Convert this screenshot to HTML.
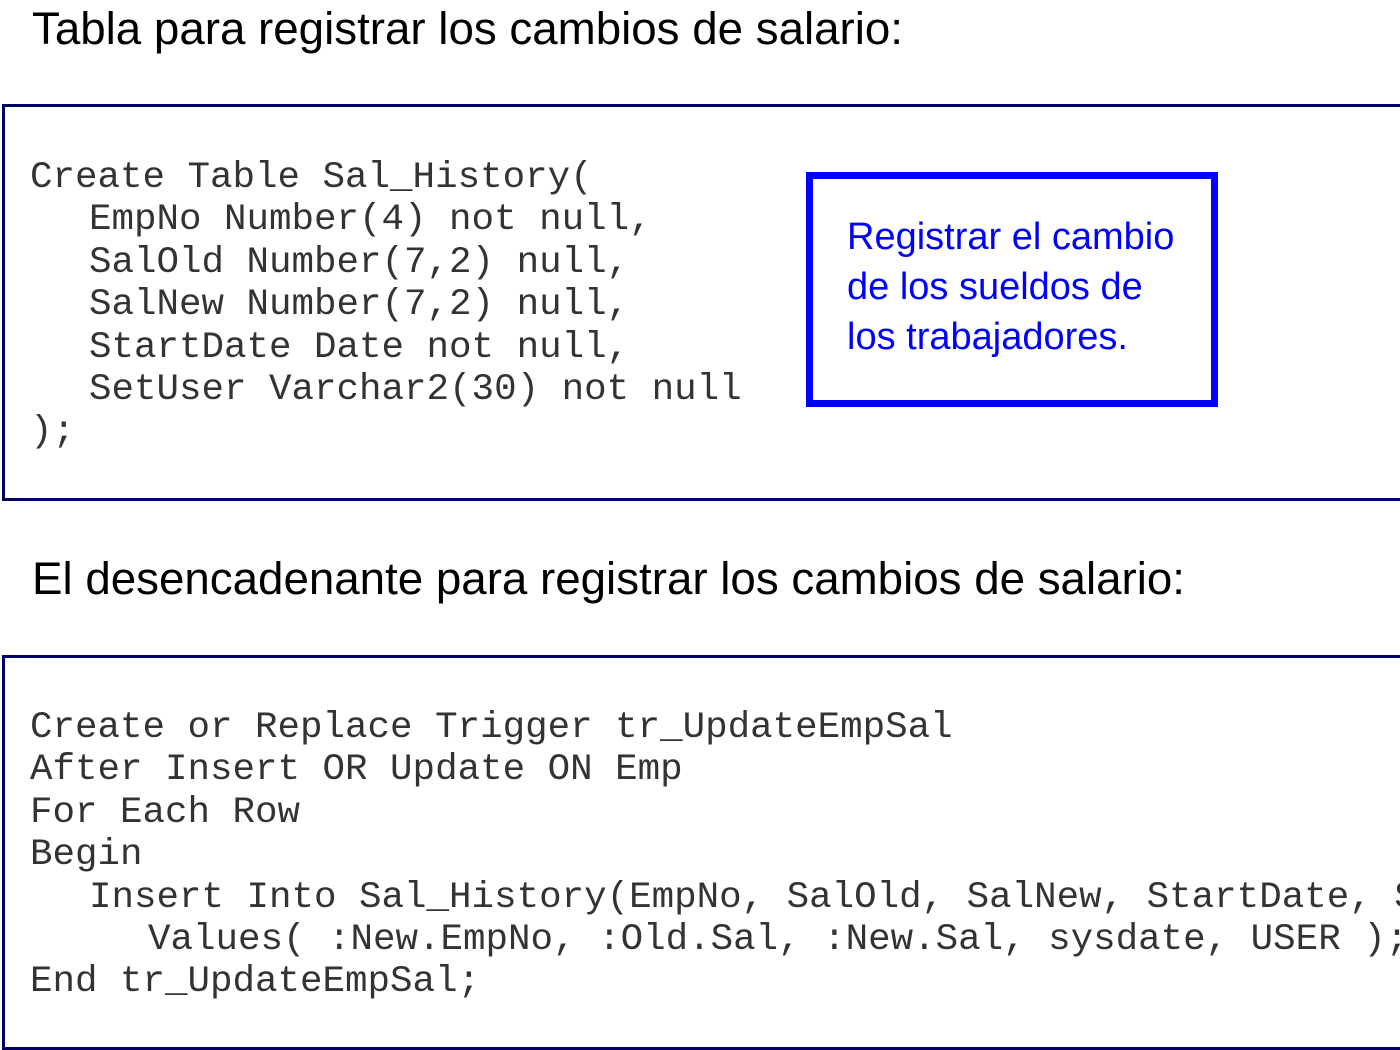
<!DOCTYPE html>
<html><head><meta charset="utf-8"><style>
body{margin:0;width:1400px;height:1050px;overflow:hidden;background:#fff;position:relative;font-family:"Liberation Sans",sans-serif}
.h{position:absolute;left:32px;font-size:45.7px;color:#000;white-space:nowrap;line-height:1}
.box{position:absolute;left:2px;width:1410px;border:3px solid #000066;box-sizing:border-box}
.code{position:absolute;left:30px;font-family:"Liberation Mono","Courier New",monospace;font-size:37.5px;color:#333;line-height:42.4px;white-space:normal}
.code div{height:42.4px;white-space:pre}
.i1{padding-left:59px}.i2{padding-left:118px}
.note{position:absolute;left:806px;top:172px;width:412px;height:235px;border:7px solid #0000ff;box-sizing:border-box}
.note div{position:absolute;left:34px;top:33px;font-size:38px;line-height:50px;color:#0000ff;white-space:nowrap}
</style></head><body>
<div class="h" style="top:6px">Tabla para registrar los cambios de salario:</div>
<div class="box" style="top:104px;height:397px"></div>
<div class="code" style="top:157px"><div>Create Table Sal_History(</div><div class="i1">EmpNo Number(4) not null,</div><div class="i1">SalOld Number(7,2) null,</div><div class="i1">SalNew Number(7,2) null,</div><div class="i1">StartDate Date not null,</div><div class="i1">SetUser Varchar2(30) not null</div><div>);</div></div>
<div class="note"><div>Registrar el cambio<br>de los sueldos de<br>los trabajadores.</div></div>
<div class="h" style="top:556px">El desencadenante para registrar los cambios de salario:</div>
<div class="box" style="top:655px;height:395px"></div>
<div class="code" style="top:707px"><div>Create or Replace Trigger tr_UpdateEmpSal</div><div>After Insert OR Update ON Emp</div><div>For Each Row</div><div>Begin</div><div class="i1">Insert Into Sal_History(EmpNo, SalOld, SalNew, StartDate, SetUser)</div><div class="i2">Values( :New.EmpNo, :Old.Sal, :New.Sal, sysdate, USER );</div><div>End tr_UpdateEmpSal;</div></div>
</body></html>
